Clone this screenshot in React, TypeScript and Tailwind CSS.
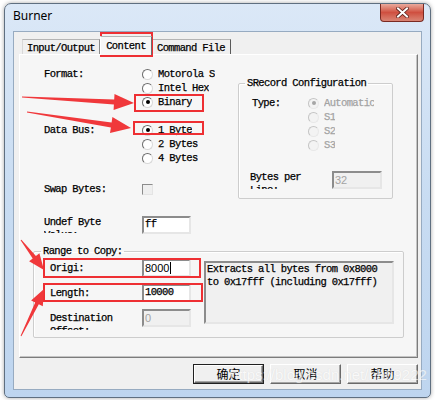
import React from "react";

const mono = "font-['Liberation_Mono','Noto_Sans_CJK_SC',monospace] text-[10.5px] tracking-[-0.63px] [-webkit-text-stroke-width:0.25px]";

const Radio = ({ label, checked, disabled }: { label: string; checked?: boolean; disabled?: boolean }) => (
  <div className="flex h-[14px] items-center">
    <span
      className={`flex h-[11px] w-[11px] shrink-0 items-center justify-center rounded-full border ${
        disabled
          ? "border-[#c4c4c4] border-r-[#e8e8e8] border-b-[#e8e8e8] bg-[#f3f3f3]"
          : "border-[#6c6c6c] border-r-[#d8d8d8] border-b-[#d8d8d8] bg-white"
      }`}
    >
      {checked && <span className={`h-[4px] w-[4px] rounded-full ${disabled ? "bg-[#a6a6a6]" : "bg-black"}`} />}
    </span>
    <span className={`ml-[5px] overflow-hidden whitespace-nowrap leading-[14px] ${disabled ? "text-[#a3a3a3]" : "text-black"}`}>
      {label}
    </span>
  </div>
);

const Field = ({ value, disabled, sans, cursor, w = "w-[49px]" }: { value: string; disabled?: boolean; sans?: boolean; cursor?: boolean; w?: string }) => (
  <div
    className={`flex h-[18px] ${w} items-center border-2 border-t-[#8c8c8c] border-l-[#8c8c8c] border-r-[#e6e6e6] border-b-[#e6e6e6] pl-[1px] ${
      disabled ? "bg-[#f0f0f0] text-[#a3a3a3]" : "bg-white text-black"
    } ${sans ? "font-['Liberation_Sans',sans-serif] text-[11px] tracking-normal [-webkit-text-stroke-width:0px]" : ""}`}
  >
    {value}
    {cursor && <span className="ml-[1px] h-[12px] w-[1px] bg-black" />}
  </div>
);

const Label2 = ({ text, h }: { text: string; h: string }) => (
  <div className={`w-[70px] overflow-hidden leading-[13px] ${h}`}>{text}</div>
);

const Btn = ({ label, def }: { label: string; def?: boolean }) => (
  <div className={`h-[20px] w-[71px] ${def ? "border border-[#202020]" : ""}`}>
    <div className="flex h-full w-full items-center justify-center border border-t-white border-l-white border-r-[#6a6a6a] border-b-[#6a6a6a] bg-[#f0f0f0] font-['Noto_Sans_CJK_SC',sans-serif] text-[12px] tracking-normal text-black shadow-[inset_-1px_-1px_0_#a5a5a5] [-webkit-text-stroke-width:0px]">
      {label}
    </div>
  </div>
);

const CloseButton = () => (
  <div className="mr-[6px] flex h-[18px] w-[44px] items-center justify-center rounded-b-[4px] border border-t-0 border-[#7a2a22] bg-gradient-to-b from-[#e9a99c] via-[#cf4f40] to-[#d98474]">
    <svg width="13" height="11" viewBox="0 0 13 11">
      <path d="M2 1.5 L11 9.5 M11 1.5 L2 9.5" stroke="#5a1f18" strokeWidth="3.6" strokeLinecap="square" />
      <path d="M2 1.5 L11 9.5 M11 1.5 L2 9.5" stroke="#ffffff" strokeWidth="2" strokeLinecap="square" />
    </svg>
  </div>
);

const arrow = (x1: number, y1: number, x2: number, y2: number, head: number, hw: number, w1: number) => {
  const dx = x2 - x1;
  const dy = y2 - y1;
  const len = Math.hypot(dx, dy);
  const ux = dx / len;
  const uy = dy / len;
  const nx = -uy;
  const ny = ux;
  const bx = x2 - ux * head;
  const by = y2 - uy * head;
  const w0 = 0.5;
  const pts = [
    [x1 + nx * w0, y1 + ny * w0],
    [bx + nx * w1, by + ny * w1],
    [bx + nx * hw, by + ny * hw],
    [x2, y2],
    [bx - nx * hw, by - ny * hw],
    [bx - nx * w1, by - ny * w1],
    [x1 - nx * w0, y1 - ny * w0],
  ];
  return pts.map(([x, y]) => `${x.toFixed(1)},${y.toFixed(1)}`).join(" ");
};

const Overlay = () => (
  <svg className="pointer-events-none absolute left-0 top-0" width="435" height="400" viewBox="0 0 435 400">
    <g fill="none" stroke="#ee2f33" strokeWidth="2">
      <rect x="101" y="33" width="51" height="23" />
      <rect x="135" y="95" width="68" height="16" />
      <rect x="134" y="122" width="69" height="12" />
      <rect x="44" y="259" width="156" height="18" />
      <rect x="44" y="284" width="158" height="17" />
    </g>
    <g fill="#f0383b">
      <polygon points={arrow(22, 97, 134, 103, 20, 8, 2.5)} />
      <polygon points={arrow(27, 112, 131, 128, 20, 8, 2.5)} />
      <polygon points={arrow(21, 240, 44, 270, 16, 6.5, 2)} />
      <polygon points={arrow(21, 336, 44, 289, 16, 6.5, 2)} />
    </g>
  </svg>
);

export default function App() {
  return (
    <div className="relative h-[400px] w-[435px] overflow-hidden bg-white">
      <div className="ml-[4px] mt-[3px] flex h-[395px] w-[427px] flex-col rounded-t-[7px] rounded-b-[5px] border border-[#5f6f80] bg-gradient-to-b from-[#dbe8f7] via-[#c8dcf2] to-[#bed5ef] shadow-[0_0_4px_rgba(0,0,0,0.35)]">
        {/* TITLE */}
        <div className="flex h-[27px] shrink-0 items-start justify-between">
          <span className="ml-[8px] mt-[4px] font-['Noto_Sans',sans-serif] text-[12px] leading-[16px] text-black">Burner</span>
          <CloseButton />
        </div>

        {/* CLIENT */}
        <div className={`mx-[8px] h-[359px] border border-[#97abc1] bg-[#f0f0f0] pl-[5px] pt-[4px] text-black ${mono}`}>
          {/* TABS */}
          <div className="flex h-[19px] items-end pl-[3px]">
            <div className="mb-[1px] flex h-[15px] w-[78px] items-center justify-center border border-b-0 border-t-[#b4b4b4] border-l-[#d8d8d8] border-r-[#8a8a8a] bg-[#f0f0f0] pt-[2px] leading-[12px]">
              Input/Output
            </div>
            <div className="relative z-10 flex h-[19px] w-[52px] items-start justify-center border border-b-0 border-t-[#b4b4b4] border-l-white border-r-[#6e6e6e] bg-[#f6f6f6] pt-[2px] leading-[14px]">
              Content
            </div>
            <div className="mb-[1px] flex h-[15px] w-[79px] items-center justify-center border border-b-0 border-l-0 border-t-[#b4b4b4] border-r-[#5a5a5a] bg-[#f0f0f0] pt-[2px] leading-[12px]">
              Command File
            </div>
          </div>

          {/* PANEL */}
          <div className="-mt-[1px] h-[304px] w-[399px] border border-t-white border-l-white border-r-[#7c7c7c] border-b-[#7c7c7c] bg-[#f6f6f6] shadow-[inset_-1px_-1px_0_#c4c4c4]">
            <div className="flex">
              {/* LEFT */}
              <div className="w-[218px] shrink-0 pl-[24px] pt-[12px]">
                <div className="flex">
                  <div className="w-[98px] leading-[14px]">Format:</div>
                  <div className="w-[75px] overflow-hidden">
                    <Radio label="Motorola S" />
                    <Radio label="Intel Hex" />
                    <Radio label="Binary" checked />
                  </div>
                </div>
                <div className="mt-[14px] flex">
                  <div className="w-[98px] leading-[14px]">Data Bus:</div>
                  <div>
                    <Radio label="1 Byte" checked />
                    <Radio label="2 Bytes" />
                    <Radio label="4 Bytes" />
                  </div>
                </div>
                <div className="mt-[17px] flex h-[14px] items-center">
                  <div className="w-[98px] leading-[14px]">Swap Bytes:</div>
                  <span className="h-[11px] w-[11px] border border-t-[#8c8c8c] border-l-[#8c8c8c] border-r-[#e4e4e4] border-b-[#e4e4e4] bg-[#efefef]" />
                </div>
                <div className="mt-[20px] flex items-start">
                  <div className="w-[98px]">
                    <Label2 text="Undef Byte Value:" h="h-[17px]" />
                  </div>
                  <Field value="ff" />
                </div>
              </div>

              {/* SRECORD */}
              <fieldset className="mt-[22px] h-[122px] w-[155px] rounded-[2px] border border-[#cdcdcd] shadow-[inset_1px_1px_0_#fff]">
                <legend className="ml-[6px] px-[2px] leading-[12px]">SRecord Configuration</legend>
                <div className="mt-[7px] flex pl-[13px]">
                  <div className="w-[56px] leading-[14px]">Type:</div>
                  <div className="w-[66px] overflow-hidden">
                    <Radio label="Automatic" checked disabled />
                    <Radio label="S1" disabled />
                    <Radio label="S2" disabled />
                    <Radio label="S3" disabled />
                  </div>
                </div>
                <div className="mt-[19px] flex items-start pl-[11px]">
                  <div className="w-[82px]">
                    <Label2 text="Bytes per Line:" h="h-[18px]" />
                  </div>
                  <Field value="32" disabled sans w="w-[50px]" />
                </div>
              </fieldset>
            </div>

            {/* RANGE */}
            <fieldset className="ml-[13px] mt-[11px] h-[93px] w-[371px] rounded-[2px] border border-[#cdcdcd] shadow-[inset_1px_1px_0_#fff]">
              <legend className="ml-[7px] px-[2px] leading-[12px]">Range to Copy:</legend>
              <div className="mt-[2px] flex pl-[16px]">
                <div className="flex flex-col gap-[7px]">
                  <div className="flex h-[18px] items-center">
                    <div className="w-[92px] leading-[14px]">Origi:</div>
                    <Field value="8000" sans cursor />
                  </div>
                  <div className="flex h-[18px] items-center">
                    <div className="w-[92px] leading-[14px]">Length:</div>
                    <Field value="10000" />
                  </div>
                  <div className="flex h-[18px] items-start">
                    <div className="mt-[2.5px] w-[92px]">
                      <Label2 text="Destination Offset:" h="h-[18px]" />
                    </div>
                    <Field value="0" disabled sans />
                  </div>
                </div>
                <div className="ml-[13px] mt-[2px] h-[63px] w-[190px] border-2 border-t-[#8c8c8c] border-l-[#8c8c8c] border-r-[#e6e6e6] border-b-[#e6e6e6] bg-[#f0f0f0] pl-[1px] leading-[13px]">
                  Extracts all bytes from 0x8000
                  <br />
                  to 0x17fff (including 0x17fff)
                </div>
              </div>
            </fieldset>
          </div>

          {/* BUTTONS */}
          <div className="mt-[6px] flex justify-end gap-[6px] pr-[3px]">
            <Btn label="确定" def />
            <Btn label="取消" />
            <Btn label="帮助" />
          </div>
        </div>
      </div>

      <Overlay />
      <div className="pointer-events-none absolute left-[230px] top-[366px] font-['Liberation_Sans',sans-serif] text-[15px] leading-[18px] text-white opacity-60 [text-shadow:0_0_1px_#c8c8c8]">
        https://blog.csdn.net/hb69222
      </div>
    </div>
  );
}
